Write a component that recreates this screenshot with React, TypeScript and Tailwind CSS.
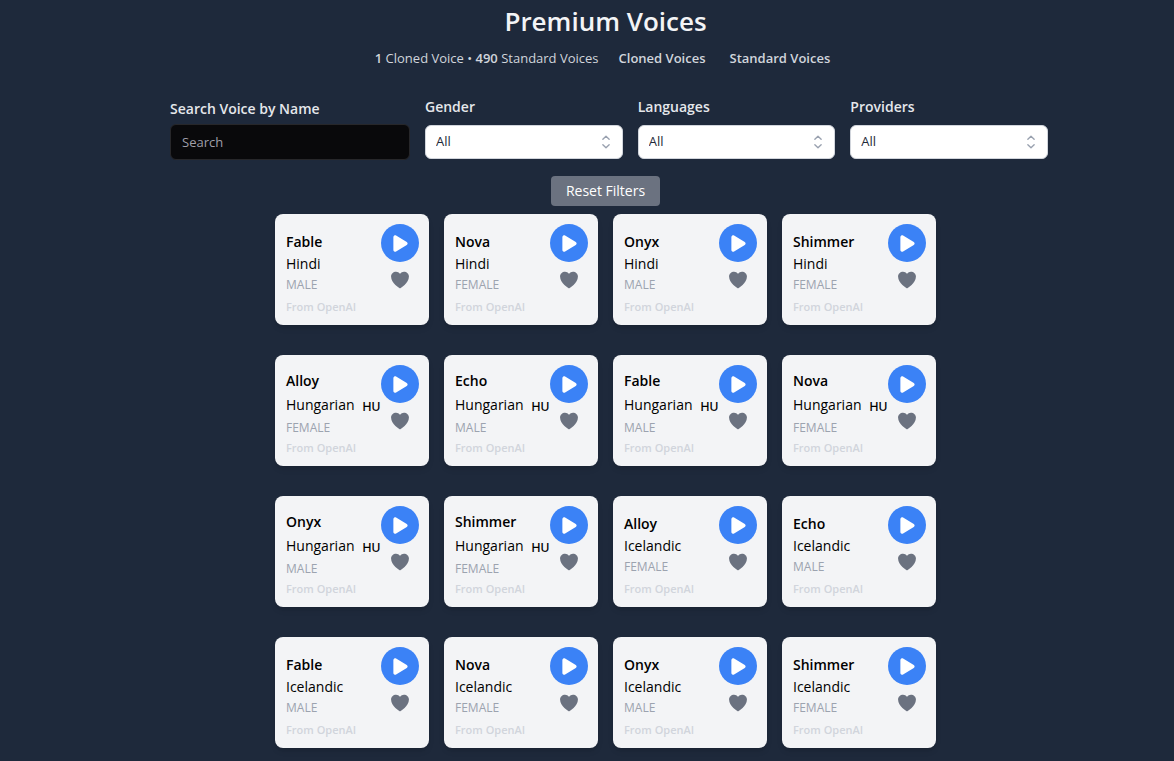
import React, { useState } from 'react';
import { FaPlay } from 'react-icons/fa6';
import { HiHeart } from 'react-icons/hi2';

type Voice = {
  name: string;
  language: string;
  gender: 'MALE' | 'FEMALE';
  provider: string;
  country?: string;
};

const voices: Voice[] = [
  { name: 'Fable', language: 'Hindi', gender: 'MALE', provider: 'OpenAI' },
  { name: 'Nova', language: 'Hindi', gender: 'FEMALE', provider: 'OpenAI' },
  { name: 'Onyx', language: 'Hindi', gender: 'MALE', provider: 'OpenAI' },
  { name: 'Shimmer', language: 'Hindi', gender: 'FEMALE', provider: 'OpenAI' },
  { name: 'Alloy', language: 'Hungarian', gender: 'FEMALE', provider: 'OpenAI', country: 'HU' },
  { name: 'Echo', language: 'Hungarian', gender: 'MALE', provider: 'OpenAI', country: 'HU' },
  { name: 'Fable', language: 'Hungarian', gender: 'MALE', provider: 'OpenAI', country: 'HU' },
  { name: 'Nova', language: 'Hungarian', gender: 'FEMALE', provider: 'OpenAI', country: 'HU' },
  { name: 'Onyx', language: 'Hungarian', gender: 'MALE', provider: 'OpenAI', country: 'HU' },
  { name: 'Shimmer', language: 'Hungarian', gender: 'FEMALE', provider: 'OpenAI', country: 'HU' },
  { name: 'Alloy', language: 'Icelandic', gender: 'FEMALE', provider: 'OpenAI' },
  { name: 'Echo', language: 'Icelandic', gender: 'MALE', provider: 'OpenAI' },
  { name: 'Fable', language: 'Icelandic', gender: 'MALE', provider: 'OpenAI' },
  { name: 'Nova', language: 'Icelandic', gender: 'FEMALE', provider: 'OpenAI' },
  { name: 'Onyx', language: 'Icelandic', gender: 'MALE', provider: 'OpenAI' },
  { name: 'Shimmer', language: 'Icelandic', gender: 'FEMALE', provider: 'OpenAI' },
];

type FilterSelectProps = {
  id: string;
  label: string;
  options: string[];
  value: string;
  onChange: (value: string) => void;
};

function FilterSelect({ id, label, options, value, onChange }: FilterSelectProps) {
  return (
    <div className="flex-1 min-w-0 pb-px">
      <label htmlFor={id} className="block h-7 text-sm leading-5 font-semibold text-gray-200">
        {label}
      </label>
      <div className="relative">
        <select
          id={id}
          value={value}
          onChange={(e) => onChange(e.target.value)}
          className="block w-full h-[34px] appearance-none rounded-md border border-gray-300 bg-white pl-[10px] pr-8 text-[13px] text-gray-800"
        >
          <option>All</option>
          {options.map((option) => (
            <option key={option}>{option}</option>
          ))}
        </select>
        <svg
          viewBox="0 0 20 20"
          fill="none"
          stroke="currentColor"
          strokeWidth="1.5"
          strokeLinecap="round"
          strokeLinejoin="round"
          className="pointer-events-none absolute right-2 top-2 h-[18px] w-[18px] text-gray-400"
        >
          <path d="M6.500 7 10 3.500l3.500 3.500M6.500 13l3.500 3.500 3.500-3.500" />
        </svg>
      </div>
    </div>
  );
}

function VoiceCard({ voice }: { voice: Voice }) {
  const [liked, setLiked] = useState(false);

  return (
    <article className="flex justify-between rounded-lg bg-gray-100 pl-[11px] pr-[10px] shadow-md">
      <div className="min-w-0 w-0 flex-1 whitespace-nowrap pt-[15px] pb-[10px]">
        <div className="flex h-[68px] flex-col justify-center">
          <h2 className="text-sm leading-[22px] font-semibold text-black">{voice.name}</h2>
          {voice.country ? (
            <p className="flex h-[26px] items-center gap-2 text-sm text-black">
              {voice.language}
              <span className="pt-1 font-['Inter',sans-serif] text-xs font-medium">{voice.country}</span>
            </p>
          ) : (
            <p className="text-sm leading-[22px] text-black">{voice.language}</p>
          )}
          <p className="text-xs leading-5 text-[#9ca3af]">{voice.gender}</p>
        </div>
        <p className="mt-0.5 text-[11px] leading-4 font-semibold text-gray-300">From {voice.provider}</p>
      </div>

      <div className="flex shrink-0 flex-col items-center gap-[7px] pt-[10px]">
        <button
          aria-label={`Play ${voice.name}`}
          className="flex h-[38px] w-[38px] items-center justify-center rounded-full bg-[#3b82f6] text-white"
        >
          <FaPlay size={19} />
        </button>
        <button
          aria-label={`Like ${voice.name}`}
          aria-pressed={liked}
          onClick={() => setLiked(!liked)}
          className={liked ? 'text-red-500' : 'text-[#6b7280]'}
        >
          <HiHeart size={22} />
        </button>
      </div>
    </article>
  );
}

export default function App() {
  const [search, setSearch] = useState('');
  const [gender, setGender] = useState('All');
  const [language, setLanguage] = useState('All');
  const [provider, setProvider] = useState('All');

  const resetFilters = () => {
    setSearch('');
    setGender('All');
    setLanguage('All');
    setProvider('All');
  };

  const filtered = voices.filter(
    (v) =>
      v.name.toLowerCase().includes(search.toLowerCase()) &&
      (gender === 'All' || v.gender === gender.toUpperCase()) &&
      (language === 'All' || v.language === language) &&
      (provider === 'All' || v.provider === provider)
  );

  return (
    <main className="min-h-screen bg-[#1e293b] pl-[37px] pb-[13px] font-['Open_Sans',sans-serif]">
      <h1 className="pt-[3px] text-center text-[26px] leading-9 font-semibold text-gray-100">Premium Voices</h1>

      <div className="mt-2 flex items-center justify-center pr-[6px] text-[13px] leading-[22px] text-gray-300">
        <p>
          <b className="font-semibold">1</b> Cloned Voice • <b className="font-semibold">490</b> Standard Voices
        </p>
        <button className="ml-5 font-semibold">Cloned Voices</button>
        <button className="ml-6 font-semibold">Standard Voices</button>
      </div>

      {/* Filters */}
      <div className="mx-auto mt-7 flex max-w-[885px] items-end gap-[15px] pl-[7px]">
        <div className="w-60 shrink-0">
          <label htmlFor="search" className="block h-[25px] text-sm leading-5 font-semibold text-gray-200">
            Search Voice by Name
          </label>
          <input
            id="search"
            type="text"
            placeholder="Search"
            value={search}
            onChange={(e) => setSearch(e.target.value)}
            className="block h-9 w-full rounded-md border border-zinc-800 bg-zinc-950 px-[11px] text-[13px] text-gray-200 placeholder:text-zinc-400"
          />
        </div>
        <FilterSelect id="gender" label="Gender" options={['Male', 'Female']} value={gender} onChange={setGender} />
        <FilterSelect
          id="languages"
          label="Languages"
          options={['Hindi', 'Hungarian', 'Icelandic']}
          value={language}
          onChange={setLanguage}
        />
        <FilterSelect id="providers" label="Providers" options={['OpenAI']} value={provider} onChange={setProvider} />
      </div>

      <div className="mt-4 flex justify-center">
        <button onClick={resetFilters} className="h-[30px] rounded-sm bg-[#6b7280] px-[15px] text-sm text-white">
          Reset Filters
        </button>
      </div>

      {/* Voices */}
      <div className="mx-auto mt-2 grid max-w-[661px] grid-cols-4 gap-x-[15px] gap-y-[30px]">
        {filtered.map((voice) => (
          <VoiceCard key={`${voice.name}-${voice.language}`} voice={voice} />
        ))}
      </div>
    </main>
  );
}
